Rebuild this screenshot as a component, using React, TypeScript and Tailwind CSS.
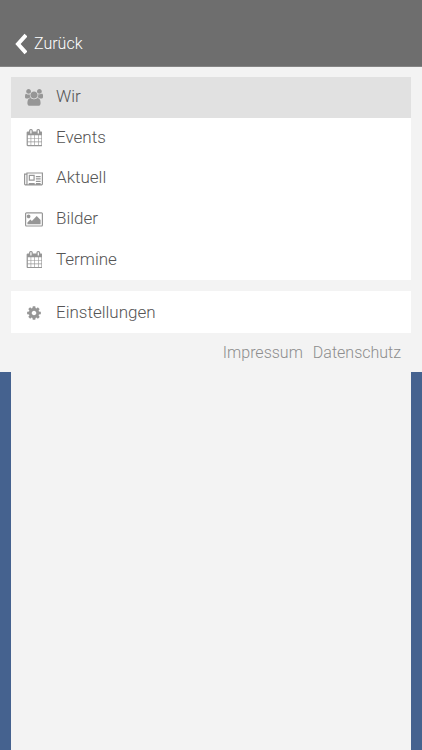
import React from "react";

type IconProps = { width: number; path: string; className: string };

function Icon({ width, path, className }: IconProps) {
  return (
    <svg viewBox={`0 0 ${width} 1792`} className={className} fill="currentColor" fillRule="evenodd" aria-hidden="true">
      <path d={path} />
    </svg>
  );
}

const users =
  "M593 896q-162 5-265 128h-134q-82 0-138-40.5t-56-118.5q0-353 124-353 6 0 43.5 21t97.5 42.5 119 21.5q67 0 133-23-5 37-5 66 0 159 93 287zm1071 637q0 120-73 189.5t-194 69.5h-874q-121 0-194-69.5t-73-189.5q0-53 3.5-103.5t14-109 26.5-108.5 43-97.5 62-81 85.5-53.5 111.5-20q10 0 43 21.5t73 48 107 48 135 21.5 135-21.5 107-48 73-48 43-21.5q61 0 111.5 20t85.5 53.5 62 81 43 97.5 26.5 108.5 14 109 3.5 103.5zm-1024-1277q0 106-75 181t-181 75-181-75-75-181 75-181 181-75 181 75 75 181zm704 384q0 159-112.5 271.5t-271.5 112.5-271.5-112.5-112.5-271.5 112.5-271.5 271.5-112.5 271.5 112.5 112.5 271.5zm576 225q0 78-56 118.5t-138 40.5h-134q-103-123-265-128 93-128 93-287 0-29-5-66 66 23 133 23 59 0 119-21.5t97.5-42.5 43.5-21q124 0 124 353zm-128-609q0 106-75 181t-181 75-181-75-75-181 75-181 181-75 181 75 75 181z";
const calendar =
  "M192 1664h288v-288h-288v288zm352 0h320v-288h-320v288zm-352-352h288v-320h-288v320zm352 0h320v-320h-320v320zm-352-384h288v-288h-288v288zm736 736h320v-288h-320v288zm-384-736h320v-288h-320v288zm768 736h288v-288h-288v288zm-384-352h320v-320h-320v320zm-352-864v-288q0-13-9.5-22.5t-22.5-9.5h-64q-13 0-22.5 9.5t-9.5 22.5v288q0 13 9.5 22.5t22.5 9.5h64q13 0 22.5-9.5t9.5-22.5zm736 864h288v-320h-288v320zm-384-384h320v-288h-320v288zm384 0h288v-288h-288v288zm32-480v-288q0-13-9.5-22.5t-22.5-9.5h-64q-13 0-22.5 9.5t-9.5 22.5v288q0 13 9.5 22.5t22.5 9.5h64q13 0 22.5-9.5t9.5-22.5zm384-64v1280q0 52-38 90t-90 38h-1408q-52 0-90-38t-38-90v-1280q0-52 38-90t90-38h128v-96q0-66 47-113t113-47h64q66 0 113 47t47 113v96h384v-96q0-66 47-113t113-47h64q66 0 113 47t47 113v96h128q52 0 90 38t38 90z";
const newspaper =
  "M1024 1024h-384v-384h384v384zm128 384v128h-640v-128h640zm0-896v640h-640v-640h640zm640 896v128h-512v-128h512zm0-256v128h-512v-128h512zm0-256v128h-512v-128h512zm0-256v128h-512v-128h512zM256 1472V512H128v960q0 26 19 45t45 19 45-19 19-45zm1664 0V384H384v1088q0 33-11 64h1483q26 0 45-19t19-45zm128-1216v1216q0 80-56 136t-136 56H192q-80 0-136-56T0 1472V384h256V256h1792z";
const picture =
  "M576 576q0 80-56 136t-136 56-136-56-56-136 56-136 136-56 136 56 56 136zm1088 384v448h-1408v-192l320-320 160 160 512-512zm96-704h-1600q-13 0-22.5 9.5t-9.5 22.5v1216q0 13 9.5 22.5t22.5 9.5h1600q13 0 22.5-9.5t9.5-22.5v-1216q0-13-9.5-22.5t-22.5-9.5zm160 32v1216q0 66-47 113t-113 47h-1600q-66 0-113-47t-47-113v-1216q0-66 47-113t113-47h1600q66 0 113 47t47 113z";
const cog =
  "M1152 896q0-106-75-181t-181-75-181 75-75 181 75 181 181 75 181-75 75-181zm512-109v222q0 12-8 23t-20 13l-185 28q-19 54-39 91 35 50 107 138 10 12 10 25t-9 23q-27 37-99 108t-94 71q-12 0-26-9l-138-108q-44 23-91 38-16 136-29 186-7 28-36 28h-222q-14 0-24.5-8.5t-11.5-21.5l-28-184q-49-16-90-37l-141 107q-10 9-25 9-14 0-25-11-126-114-165-168-7-10-7-23 0-12 8-23 15-21 51-66.5t54-70.5q-27-50-41-99l-183-27q-13-2-21-12.5t-8-23.5v-222q0-12 8-23t19-13l186-28q14-46 39-92-40-57-107-138-10-12-10-24 0-10 9-23 26-36 98.5-107.5t94.5-71.5q13 0 26 10l138 107q44-23 91-38 16-136 29-186 7-28 36-28h222q14 0 24.5 8.5t11.5 21.5l28 184q49 16 90 37l142-107q9-9 24-9 13 0 25 10 129 119 165 170 7 8 7 22 0 12-8 23-15 21-51 66.5t-54 70.5q26 50 41 98l183 28q13 2 21 12.5t8 23.5z";

const items = [
  { label: "Wir", width: 1920, path: users, size: "w-[18px]", active: true },
  { label: "Events", width: 1664, path: calendar, size: "w-4" },
  { label: "Aktuell", width: 2048, path: newspaper, size: "w-[19px]" },
  { label: "Bilder", width: 1920, path: picture, size: "w-[18px]" },
  { label: "Termine", width: 1664, path: calendar, size: "w-4" },
];

type RowProps = { label: string; width: number; path: string; size: string; active?: boolean };

function Row({ label, width, path, size, active }: RowProps) {
  return (
    <a
      href="#"
      aria-current={active ? "page" : undefined}
      className={`flex h-full items-center gap-3 px-3 text-[17px] leading-6 text-[#555] ${active ? "bg-[#e1e1e1]" : "bg-white"}`}
    >
      <span className="flex w-[21px] shrink-0 justify-center text-[#969696]">
        <Icon width={width} path={path} className={size} />
      </span>
      <span className="pb-[2px]">{label}</span>
    </a>
  );
}

export default function App() {
  return (
    <div className="flex min-h-screen flex-col bg-[#45628f] font-['Roboto',sans-serif] font-light">
      <header className="flex h-[67px] items-end border-b border-[#858585] bg-[#6e6e6e] px-[15px] pb-[10px]">
        <button type="button" className="flex items-center gap-[7px] text-base font-light text-white">
          <svg viewBox="0 0 12 22" className="h-[22px] w-3" fill="none" stroke="currentColor" strokeWidth="4" aria-hidden="true">
            <path d="M11 2L3 11L11 20" />
          </svg>
          Zurück
        </button>
      </header>
      <div className="bg-[#f3f3f3] px-[11px] pt-[10px]">
        <nav aria-label="Hauptmenü">
          <ul className="grid h-[203px] grid-rows-5">
            {items.map((item) => (
              <li key={item.label}>
                <Row {...item} />
              </li>
            ))}
          </ul>
          <div className="mt-[11px] h-[42px] bg-white pt-[2px]">
            <Row label="Einstellungen" width={1792} path={cog} size="w-4" />
          </div>
        </nav>
        <footer className="flex h-[39px] items-center justify-end gap-[10px] px-[10px] text-base text-[#8d8d8d]">
          <a href="#">Impressum</a>
          <a href="#">Datenschutz</a>
        </footer>
      </div>
      <main className="mx-[11px] flex-1 bg-[#f3f3f3]" />
    </div>
  );
}
